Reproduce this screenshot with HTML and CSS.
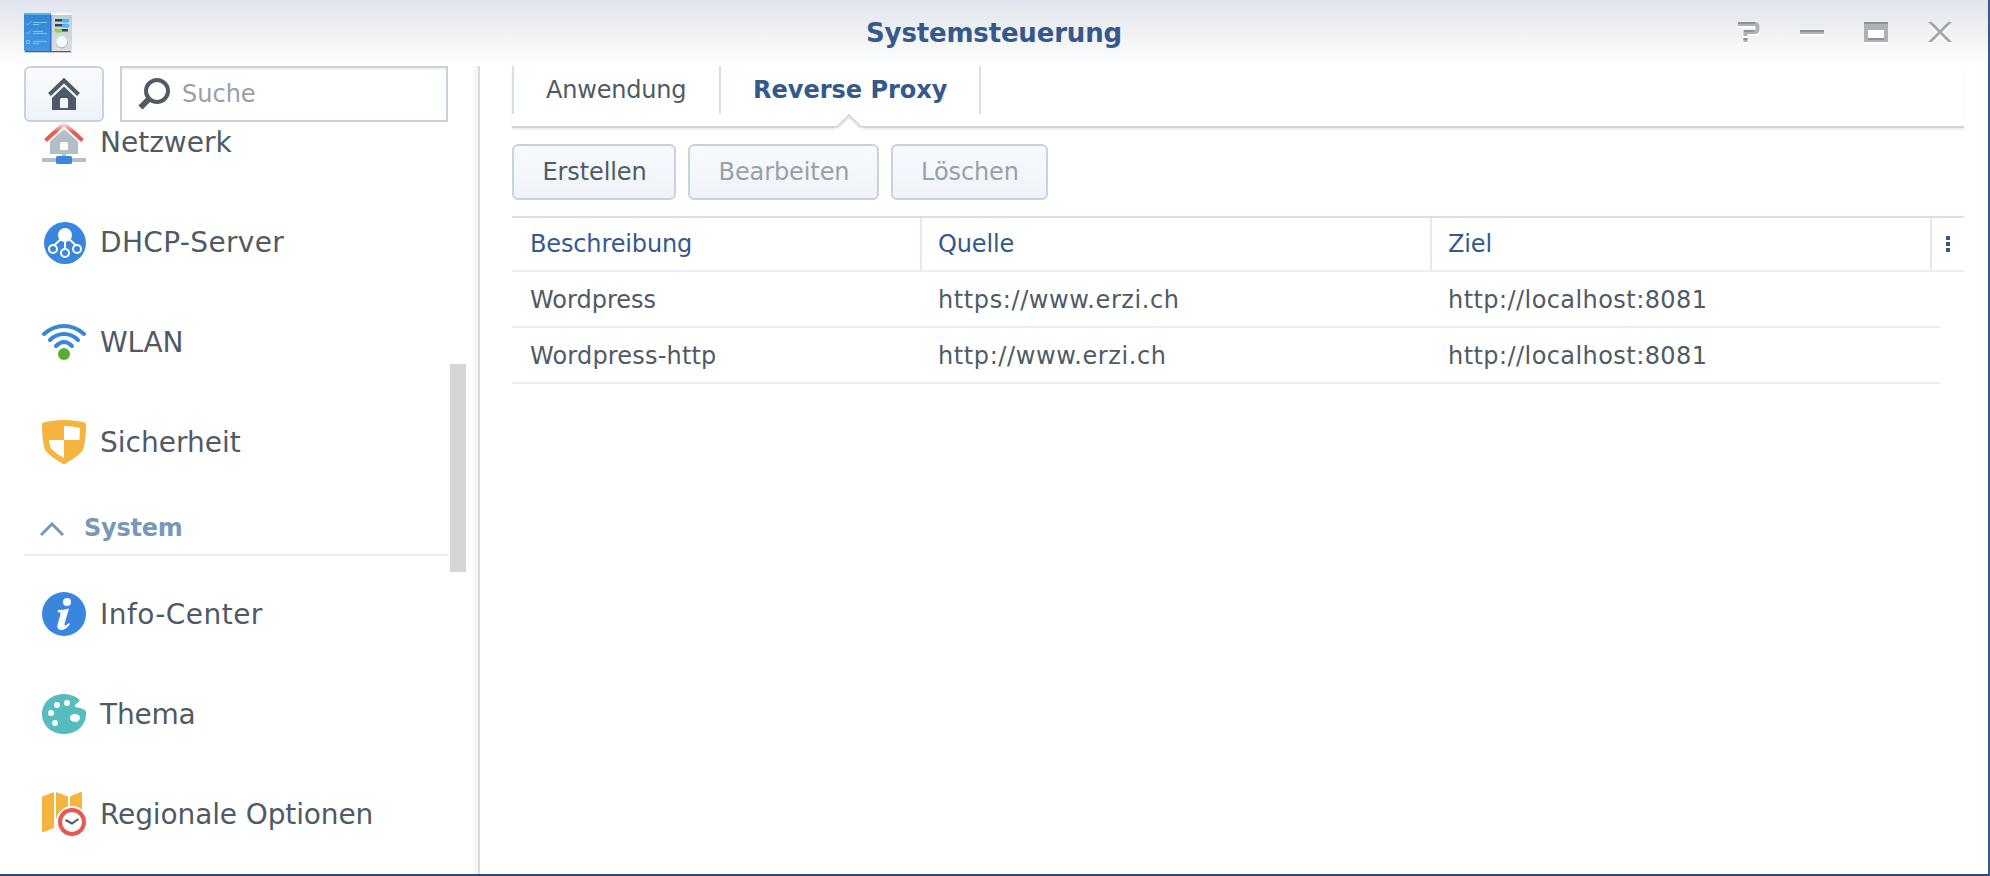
FILE: index.html
```html
<!DOCTYPE html>
<html lang="de">
<head>
<meta charset="utf-8">
<title>Systemsteuerung</title>
<link rel="stylesheet" href="styles.css">
</head>
<body>
<div class="window">
  <header class="titlebar">
    <svg class="app-icon" width="48" height="42" viewBox="0 0 48 42">
      <defs>
        <linearGradient id="panel" x1="0" y1="0" x2="0" y2="1"><stop offset="0" stop-color="#c0ced6"/><stop offset="1" stop-color="#dcdfe2"/></linearGradient>
        <linearGradient id="sheet" x1="0" y1="0" x2="0" y2="1"><stop offset="0" stop-color="#3583d6"/><stop offset="1" stop-color="#4597e0"/></linearGradient>
      </defs>
      <rect x="1" y="38" width="46" height="2" fill="#c9cbcf"/>
      <rect x="1" y="37" width="46" height="2" fill="#5b5f65"/>
      <rect x="26" y="0" width="22" height="38" rx="1" fill="url(#panel)"/>
      <rect x="26" y="0" width="22" height="2" rx="1" fill="#fbfbfb"/>
      <rect x="0" y="0" width="27" height="38" rx="1" fill="url(#sheet)"/>
      <rect x="0" y="0" width="27" height="2" rx="1" fill="#4fb4fb"/>
      <rect x="26" y="2" width="1.5" height="36" fill="#2c6bd0"/>
      <g stroke="#6fd0f8" stroke-width="1" fill="none">
        <path d="M2 10.500l1.500 1.500L7 8.500M2 19.500l1.500 1.500L7 17.500M2.500 27.500h3v3h-3zM9 9.500h14M9 11.500h6M9 18.500h10M9 20.500h14M9 28.500h14M9 30.500h6"/>
      </g>
      <g>
        <rect x="31" y="6" width="13" height="2.500" fill="#39434c"/><rect x="31" y="11" width="13" height="2.500" fill="#39434c"/><rect x="31" y="16" width="13" height="2.500" fill="#39434c"/>
        <rect x="38" y="6" width="7" height="3.500" rx="1" fill="#4fb6f2"/><rect x="38" y="11" width="7" height="3.500" rx="1" fill="#4fb6f2"/><rect x="31" y="16" width="7" height="3.500" rx="1" fill="#8ad82e"/>
      </g>
      <circle cx="37.700" cy="29.500" r="6" fill="#a9b2b9"/>
      <circle cx="37.700" cy="28.700" r="5.600" fill="#f3fafd"/>
    </svg>
    <h1 class="title">Systemsteuerung</h1>
    <div class="controls">
      <svg width="24" height="24" viewBox="0 0 24 24"><g transform="translate(1 0)"><path d="M1 4H18Q22 5 21 9Q20 12 18 12H8.500V16M6.500 20h4" stroke="#fff" fill="none" stroke-width="4"/><path d="M1 2H17.500Q20.500 2 20.500 5V7Q20.500 10 17.500 10H8.500V14M6.500 18h4" fill="none" stroke="#adb2b7" stroke-width="4"/><path d="M1 1H18M7 9H17M6.500 17h4" stroke="#8d9298" stroke-width="2" fill="none"/></g></svg>
      <svg width="24" height="24" viewBox="0 0 24 24"><path d="M0 12h24v2H0z" fill="#fff"/><path d="M0 10h24v2H0z" fill="#adb2b7"/><path d="M0 8h24v2H0z" fill="#8d9298"/></svg>
      <svg width="24" height="24" viewBox="0 0 24 24"><path d="M0 20h24v2H0zM4 8h16v8H4z" fill="#fff" fill-opacity=".8"/><path fill-rule="evenodd" d="M0 0h24v20H0zM4 8v8h16V8z" fill="#adb2b7"/><path d="M0 0h24v2H0zM4 16h16v2H4z" fill="#8d9298"/></svg>
      <svg width="24" height="24" viewBox="0 0 24 24"><path d="M2 3L22 22M22 3L2 22" stroke="#fff" stroke-width="3" fill="none"/><path d="M0 0h4l8 8 8-8h4L14 10l10 10h-4l-8-8-8 8H0L10 10z" fill="#a3a8ad"/></svg>
    </div>
  </header>

  <div class="body">
    <aside class="sidebar">
      <div class="tools">
        <button class="btn home" aria-label="Start">
          <svg width="32" height="32" viewBox="0 0 32 32"><path d="M1.500 16.500L16 2.500L30.500 16.500" fill="none" stroke="#505a64" stroke-width="4"/><path fill-rule="evenodd" d="M16 8.500L28 20V32H4V20zM13.500 20Q12 20 12 21.500V30h8V21.500Q20 20 18.500 20z" fill="#505a64"/></svg>
        </button>
        <div class="search">
          <svg width="32" height="32" viewBox="0 0 32 32"><circle cx="19" cy="13" r="11" fill="none" stroke="#505a64" stroke-width="4"/><path d="M11 21L2.500 29.500" stroke="#505a64" stroke-width="6"/></svg>
          <span class="placeholder">Suche</span>
        </div>
      </div>
      <div class="scroll">
        <nav class="list">
          <a class="item"><svg width="44" height="44" viewBox="0 0 44 44"><path d="M3.500 20.500L22 3.500L40.500 20.500" fill="none" stroke="#e65a52" stroke-width="4"/><path fill-rule="evenodd" d="M22 9L36 21.500V34H24v3H20V34H8V21.500zM20 22Q18 22 18 24v6h8V24Q26 22 24 22z" fill="#b5bdc7"/><path d="M0 38h44v4H0z" fill="#b5bdc7"/><rect x="14" y="36" width="16" height="8" rx="1.500" fill="#3a86de"/></svg><span>Netzwerk</span></a>
          <a class="item"><svg width="44" height="44" viewBox="0 0 44 44"><circle cx="23" cy="23" r="21" fill="#3a86de"/><circle cx="23" cy="15" r="7" fill="#fff"/><path d="M20 18l-8.500 8M26 18l8.500 8M23 18v11" stroke="#fff" stroke-width="2"/><g fill="#3a86de" stroke="#fff" stroke-width="2"><circle cx="11" cy="29" r="4"/><circle cx="23" cy="33" r="4"/><circle cx="35" cy="29" r="4"/></g></svg><span class="dhcp">DHCP-Server</span></a>
          <a class="item"><svg width="44" height="44" viewBox="0 0 44 44"><g fill="none" stroke="#3a86de" stroke-width="4" stroke-linecap="round"><path d="M2 14Q11 6 22 6T42 14"/><path d="M8 20Q14 14 22 14T36 20"/><path d="M14 26Q18 22 22 22T30 26"/></g><circle cx="22" cy="34" r="6" fill="#58ae31"/></svg><span class="tight">WLAN</span></a>
          <a class="item"><svg width="44" height="44" viewBox="0 0 44 44"><path d="M0 4Q0 3 1 2.600Q10 0 22 0T43 2.600Q44 3 44 4Q44 20 41 30Q37 36 23.500 43.500Q22 44.500 20.500 43.500Q7 36 3 30Q0 20 0 4z" fill="#f4b43e"/><path d="M22 6Q31 6 38 8Q38 14 37.300 20H22z" fill="#fff"/><path d="M7 20H22V38Q14 34 8.700 28Q7.300 24 7 20z" fill="#fff"/></svg><span>Sicherheit</span></a>
          <div class="group"><svg width="24" height="14" viewBox="0 0 24 14"><path d="M1 13L12 2L23 13" fill="none" stroke="#7899b6" stroke-width="3"/></svg><span class="tight">System</span></div>
          <a class="item"><svg width="44" height="44" viewBox="0 0 44 44"><circle cx="22" cy="22" r="22" fill="#3a86de"/><circle cx="25" cy="10" r="4" fill="#fff"/><path d="M16 18Q22 18 27 16.500L22.500 32Q22 34 24 33.300L27 31L28 32Q24 38 19 38Q14.500 37.500 15.500 33L18.500 22Q19 20 15.500 20z" fill="#fff"/></svg><span class="info">Info-Center</span></a>
          <a class="item"><svg width="44" height="44" viewBox="0 0 44 44"><path d="M22 2Q32 2 38 8.500L33 13Q32.500 15 35 15.500Q41 16 44 19V22C44 33 35 42 22 42S0 33 0 22S9 2 22 2z" fill="#56bcbd"/><g fill="#fff"><circle cx="25" cy="11" r="3"/><circle cx="15" cy="13" r="3"/><circle cx="9" cy="21" r="3"/><circle cx="13" cy="31" r="3"/><ellipse cx="33" cy="26" rx="5" ry="4"/></g></svg><span class="tight">Thema</span></a>
          <a class="item"><svg width="44" height="44" viewBox="0 0 44 44"><path d="M0 4.500L12 0V36L1.500 40Q0 40.300 0 39zM14 0L26 4.500V30L14 34zM28 4.500L38.500 0Q40 0 40 1V30H28z" fill="#f4b43e"/><circle cx="30" cy="30" r="16" fill="#fff"/><circle cx="30" cy="30" r="12" fill="none" stroke="#e65a52" stroke-width="4"/><path d="M23.500 28L30 31.500L36.500 27" fill="none" stroke="#505a64" stroke-width="2"/></svg><span class="region">Regionale Optionen</span></a>
        </nav>
        <div class="track"><div class="thumb"></div></div>
      </div>
    </aside>

    <main class="main">
      <div class="tabs">
        <span class="tab tab-app">Anwendung</span>
        <span class="tab tab-proxy active">Reverse Proxy
          <svg class="notch" width="28" height="18" viewBox="0 0 28 18"><path d="M0 14L2 12L14 0L26 12L28 14V18H0z" fill="#fff"/><path d="M2 14.500L14 2.500L26 14.500" fill="none" stroke="#ebebeb" stroke-width="3"/><path d="M1 13L3 12L14 1L25 12L27 13" fill="none" stroke="#d2d2d2" stroke-width="1.500"/></svg>
        </span>
      </div>
      <div class="toolbar">
        <button class="btn create">Erstellen</button>
        <button class="btn edit off">Bearbeiten</button>
        <button class="btn delete off">Löschen</button>
      </div>
      <div class="table">
        <div class="row head"><span class="c1">Beschreibung</span><span class="c2">Quelle</span><span class="c3">Ziel</span><span class="more"><i></i><i></i><i></i></span></div>
        <div class="row"><span class="c1">Wordpress</span><span class="c2 url">https://www.erzi.ch</span><span class="c3 host">http://localhost:8081</span></div>
        <div class="row"><span class="c1 wph">Wordpress-http</span><span class="c2 url">http://www.erzi.ch</span><span class="c3 host">http://localhost:8081</span></div>
      </div>
    </main>
  </div>
</div>
</body>
</html>
```
FILE: styles.css
```css
* { box-sizing: border-box; }
body {
  margin: 0;
  font-family: "DejaVu Sans", Verdana, sans-serif;
  font-size: 24px;
  color: #505a64;
}
svg { display: block; flex: none; }
.window {
  width: 1990px;
  height: 876px;
  overflow: hidden;
  display: flex;
  flex-direction: column;
  border-right: 2px solid #375a92;
  border-bottom: 2px solid #2f4a78;
  background: linear-gradient(#e1e5ee, #e9ecf0 20px, #fff 66px);
}
.titlebar {
  height: 66px;
  flex: none;
  display: grid;
  grid-template-columns: 300px 1fr 300px;
  padding: 0 36px 0 24px;
  align-items: start;
}
.app-icon { margin-top: 13px; }
.title {
  margin: 0;
  padding-left: 12px;
  text-align: center;
  line-height: 66px;
  font-size: 26px;
  font-weight: bold;
  letter-spacing: -.17px;
  color: #36598c;
}
.controls {
  display: flex;
  justify-content: flex-end;
  gap: 40px;
  margin-top: 22px;
}
.body { display: flex; flex: 1; min-height: 0; }

.sidebar {
  width: 480px;
  flex: none;
  display: flex;
  flex-direction: column;
  border-right: 2px solid #dcdcdc;
  background: linear-gradient(to left, #f3f3f3, #fff 7px);
}
.tools { display: flex; gap: 16px; padding-left: 24px; }
.btn {
  height: 56px;
  padding: 1px 0 0 1px;
  border: 2px solid #c8d2dc;
  border-radius: 6px;
  background: linear-gradient(#f8fafe, #eff3f9);
  font: 24px/51px "DejaVu Sans", Verdana, sans-serif;
  letter-spacing: -.1px;
  color: #505a64;
  white-space: nowrap;
}
.home { width: 80px; display: flex; justify-content: center; padding: 10px 0 0; }
.search {
  width: 328px;
  height: 56px;
  display: flex;
  gap: 12px;
  padding: 10px 0 0 16px;
  border: 2px solid #c8d2dc;
  background: #fff;
  box-shadow: inset 0 2px #f0f2f4;
}
.placeholder { color: #98a0aa; line-height: 32px; }
.scroll { flex: 1; min-height: 0; display: flex; overflow: hidden; position: relative; }
.scroll::before {
  content: "";
  position: absolute;
  top: 0; left: 24px;
  width: 424px; height: 10px;
  background: linear-gradient(#fff, rgba(255,255,255,0));
}
.list { width: 424px; margin: -30px 0 0 24px; flex: none; }
.item {
  height: 100px;
  display: flex;
  align-items: center;
  gap: 14px;
  padding-left: 18px;
  font-size: 28px;
  white-space: nowrap;
}
.tight { letter-spacing: -.22px; }
.dhcp { letter-spacing: .35px; }
.info { letter-spacing: .45px; }
.region { letter-spacing: -.12px; }
.group {
  height: 64px;
  margin-bottom: 8px;
  padding: 10px 0 0 16px;
  display: flex;
  align-items: center;
  gap: 20px;
  border-bottom: 2px solid #e9eef4;
  font-weight: bold;
  color: #7899b6;
}
.group svg { margin-top: 1px; }
.track { padding: 242px 0 0 2px; }
.thumb { width: 16px; height: 208px; background: #d4d6d8; }

.main { flex: 1; padding: 0 24px 0 32px; }
.tabs {
  height: 62px;
  display: flex;
  align-items: flex-start;
  border-bottom: 2px solid #d2d2d2;
  box-shadow: 0 2px 2px rgba(0,0,0,.07);
}
.tab {
  height: 48px;
  line-height: 49px;
  border-left: 2px solid #d7e0ea;
  white-space: nowrap;
  position: relative;
}
.tab-app { width: 207px; padding-left: 32px; letter-spacing: -.2px; }
.tab-proxy { width: 262px; padding-left: 32px; border-right: 2px solid #d7e0ea; }
.active { font-weight: bold; color: #36598c; }
.notch { position: absolute; left: 114px; top: 48px; }
.toolbar { display: flex; gap: 12px; margin: 16px 0; }
.create { width: 164px; }
.edit { width: 191px; }
.delete { width: 157px; }
.off { color: #98a0aa; }
.table { border-top: 2px solid #d7e0ea; }
.row {
  width: 1428px;
  height: 56px;
  display: grid;
  grid-template-columns: 408px 510px 500px 1fr;
  border-bottom: 2px solid #e9eef4;
  line-height: 56px;
  white-space: nowrap;
}
.row > span { padding-left: 18px; }
.url { letter-spacing: .6px; }
.host { letter-spacing: .43px; }
.wph { letter-spacing: .18px; }
.head { width: 1452px; height: 54px; line-height: 52px; letter-spacing: -.14px; color: #36598c; }
.head > .c2, .head > .c3, .head > .more { border-left: 2px solid #e1e8f2; padding-left: 16px; }
.head > .more { padding: 18px 0 0 14px; display: flex; flex-direction: column; gap: 2px; }
.more i { width: 4px; height: 4px; background: #36598c; }
```
